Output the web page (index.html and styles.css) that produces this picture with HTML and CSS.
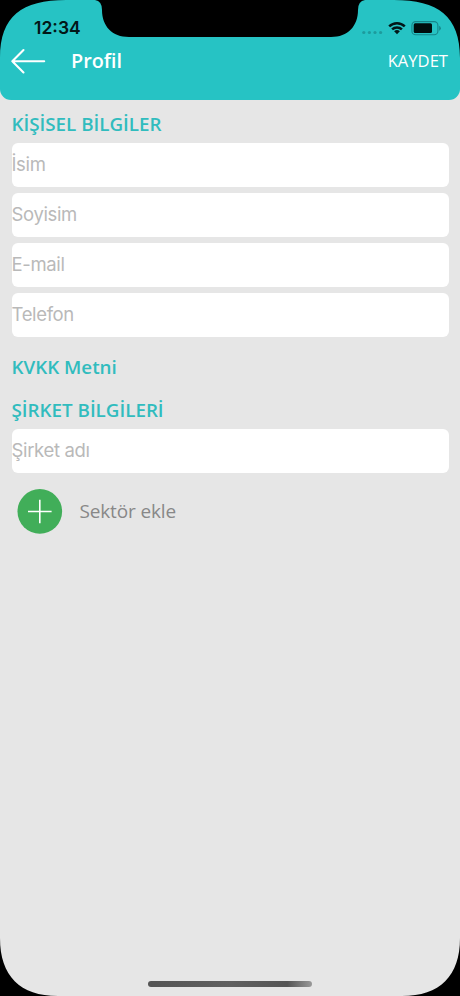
FILE: index.html
```html
<!DOCTYPE html>
<html lang="tr">
<head>
<meta charset="utf-8">
<title>Profil</title>
<link rel="stylesheet" href="styles.css">
</head>
<body>
<div class="screen">
  <header class="header">
    <div class="status">
      <span class="time">12:34</span>
      <div class="indicators">
        <svg class="dots" width="22" height="5" viewBox="0 0 22 5"><g fill="#1d9b9d"><circle cx="2.8" cy="2.5" r="1.6"/><circle cx="8.4" cy="2.5" r="1.6"/><circle cx="14" cy="2.5" r="1.6"/><circle cx="19.6" cy="2.5" r="1.6"/></g></svg>
        <svg class="wifi" width="18" height="14" viewBox="0 0 18 14"><path d="M1.2 5.3A11.2 11.2 0 0 1 16.8 5.3M4.1 8.4A7 7 0 0 1 13.9 8.4" fill="none" stroke="#021718" stroke-width="2.5"/><path d="M9 13.2 6.1 10.3A4.2 4.2 0 0 1 11.9 10.3Z" fill="#021718"/></svg>
        <svg class="battery" width="30" height="15" viewBox="0 0 30 15"><rect x=".9" y=".6" width="26" height="13.2" rx="3.8" fill="none" stroke="#168589" stroke-width="1.1"/><rect x="2.7" y="2.2" width="18.3" height="9.8" rx="1.5" fill="#000d0d"/><path d="M28.2 4.8v5q1.6-.8 1.6-2.5T28.2 4.8Z" fill="#168589"/></svg>
      </div>
    </div>
    <nav class="bar">
      <svg class="back" width="36" height="26" viewBox="0 0 36 26"><path d="M13.5 2 2.3 13.2 13.5 24.4M2.3 13.2H34.2" fill="none" stroke="#fff" stroke-width="2.1" stroke-linecap="round" stroke-linejoin="round"/></svg>
      <h1 class="title">Profil</h1>
      <span class="save">KAYDET</span>
    </nav>
  </header>
  <main class="content">
    <h2 class="heading">KİŞİSEL BİLGİLER</h2>
    <div class="fields">
      <div class="field">İsim</div>
      <div class="field">Soyisim</div>
      <div class="field">E-mail</div>
      <div class="field">Telefon</div>
    </div>
    <h2 class="heading link">KVKK Metni</h2>
    <h2 class="heading">ŞİRKET BİLGİLERİ</h2>
    <div class="field">Şirket adı</div>
    <div class="add">
      <svg width="46" height="46" viewBox="0 0 46 46"><circle cx="22.8" cy="23.4" r="22.3" fill="#41ae59"/><path d="M11 23.5H34.6M22.8 11.7V35.3" stroke="#fff" stroke-width="1.6" fill="none"/></svg>
      <span class="add-label">Sektör ekle</span>
    </div>
  </main>
  <svg class="frame" width="460" height="996" viewBox="0 0 460 996">
    <path d="M95 0Q102 1 102 10C102 26 112 37 129 37H331C348 37 358 26 358 10Q358 1 365 0Z"/>
    <path d="M0 0H66C22 0 0 16 0 58ZM460 0H394C438 0 460 16 460 58ZM0 996V938C0 976 20 996 58 996ZM460 996V938C460 976 440 996 402 996Z"/>
  </svg>
  <div class="home"></div>
</div>
</body>
</html>
```
FILE: styles.css
```css
* { box-sizing: border-box; }
body { margin: 0; background: #e6e6e6; font-family: "Open Sans", sans-serif; }
.screen { position: relative; width: 460px; height: 996px; overflow: hidden; background: #e6e6e6; }
.header { height: 99.5px; padding-top: 16px; background: #26c3c4; border-radius: 0 0 11px 11px; }
.status { display: flex; justify-content: space-between; align-items: center; height: 24px; padding: 0 19px 0 34px; }
.time { font: 600 17.5px/24px Inter, sans-serif; color: #021718; }
.indicators { display: flex; align-items: center; }
.dots { margin: 8px 5px 0 0; }
.wifi { margin: -1px 5px 0 0; }
.bar { display: flex; align-items: center; height: 42px; padding: 0 12px 0 10px; color: #fff; }
.title { margin: -2px 0 0 25px; font-size: 19.8px; font-weight: 600; }
.save { margin: -2px 0 0 auto; font-size: 16.6px; }
.content { padding: 10.5px 11.5px 0; }
.heading { margin: 0; height: 33px; font-size: 18.8px; line-height: 28px; font-weight: 600; color: #31bcbe; white-space: nowrap; }
.fields { display: flex; flex-direction: column; gap: 6px; }
.field { height: 44px; border-radius: 6px; background: #fff; font: 400 18.5px/43px Inter, sans-serif; letter-spacing: -.35px; color: #b9b9b9; }
.link { margin-top: 16px; height: 43px; }
.add { display: flex; align-items: center; margin: 15px 0 0 5px; color: #888; }
.add-label { margin-left: 17px; font-size: 19px; letter-spacing: -.15px; }
.frame { position: absolute; inset: 0; }
.home { position: absolute; left: 148px; bottom: 9px; width: 164px; height: 6px; border-radius: 3px; background: linear-gradient(90deg, #555 0%, #606060 50%, #555 85%, #999 100%); }
```
